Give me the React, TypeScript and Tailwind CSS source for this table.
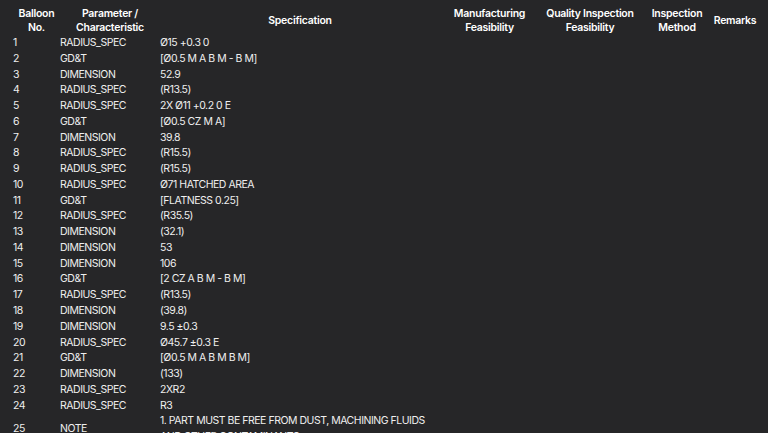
const rows: [number, string, string][] = [
  [1, 'RADIUS_SPEC', 'Ø15 +0.3 0'],
  [2, 'GD&T', '[Ø0.5 M A B M - B M]'],
  [3, 'DIMENSION', '52.9'],
  [4, 'RADIUS_SPEC', '(R13.5)'],
  [5, 'RADIUS_SPEC', '2X Ø11 +0.2 0 E'],
  [6, 'GD&T', '[Ø0.5 CZ M A]'],
  [7, 'DIMENSION', '39.8'],
  [8, 'RADIUS_SPEC', '(R15.5)'],
  [9, 'RADIUS_SPEC', '(R15.5)'],
  [10, 'RADIUS_SPEC', 'Ø71 HATCHED AREA'],
  [11, 'GD&T', '[FLATNESS 0.25]'],
  [12, 'RADIUS_SPEC', '(R35.5)'],
  [13, 'DIMENSION', '(32.1)'],
  [14, 'DIMENSION', '53'],
  [15, 'DIMENSION', '106'],
  [16, 'GD&T', '[2 CZ A B M - B M]'],
  [17, 'RADIUS_SPEC', '(R13.5)'],
  [18, 'DIMENSION', '(39.8)'],
  [19, 'DIMENSION', '9.5 ±0.3'],
  [20, 'RADIUS_SPEC', 'Ø45.7 ±0.3 E'],
  [21, 'GD&T', '[Ø0.5 M A B M B M]'],
  [22, 'DIMENSION', '(133)'],
  [23, 'RADIUS_SPEC', '2XR2'],
  [24, 'RADIUS_SPEC', 'R3'],
  [25, 'NOTE', '1. PART MUST BE FREE FROM DUST, MACHINING FLUIDS AND OTHER CONTAMINANTS'],
];

export default function App() {
  return (
    <div className="h-[433px] w-[768px] overflow-hidden bg-[#262628] text-[#efefef]" style={{ fontFamily: 'Inter, "Noto Sans", sans-serif' }}>
      <table className="ml-[13px] table-fixed border-collapse text-[10.5px]">
        <colgroup>
          <col className="w-[47px]" />
          <col className="w-[100px]" />
          <col className="w-[280px]" />
          <col className="w-[99px]" />
          <col className="w-[102px]" />
          <col className="w-[72px]" />
          <col className="w-[44px]" />
        </colgroup>
        <thead>
          {/* header cells sit centered over their columns */}
          <tr className="h-[35px] text-center align-middle leading-[14px] tracking-[-0.025em] text-white">
            <th className="pt-[7px] font-semibold">Balloon<br />No.</th>
            <th className="pt-[7px] font-semibold">Parameter /<br />Characteristic</th>
            <th className="pt-[7px] font-semibold">Specification</th>
            <th className="pt-[7px] font-semibold">Manufacturing<br />Feasibility</th>
            <th className="pt-[7px] font-semibold">Quality Inspection<br />Feasibility</th>
            <th className="pt-[7px] font-semibold">Inspection<br />Method</th>
            <th className="pt-[7px] font-semibold">Remarks</th>
          </tr>
        </thead>
        <tbody className="leading-[15.77px] tracking-[-0.045em]">
          {rows.map(([n, p, s]) => (
            <tr key={n} className="align-middle">
              <td className="p-0">{n}</td>
              <td className="p-0">{p}</td>
              <td className="p-0">{s}</td>
              <td className="p-0"></td>
              <td className="p-0"></td>
              <td className="p-0"></td>
              <td className="p-0"></td>
            </tr>
          ))}
        </tbody>
      </table>
    </div>
  );
}
